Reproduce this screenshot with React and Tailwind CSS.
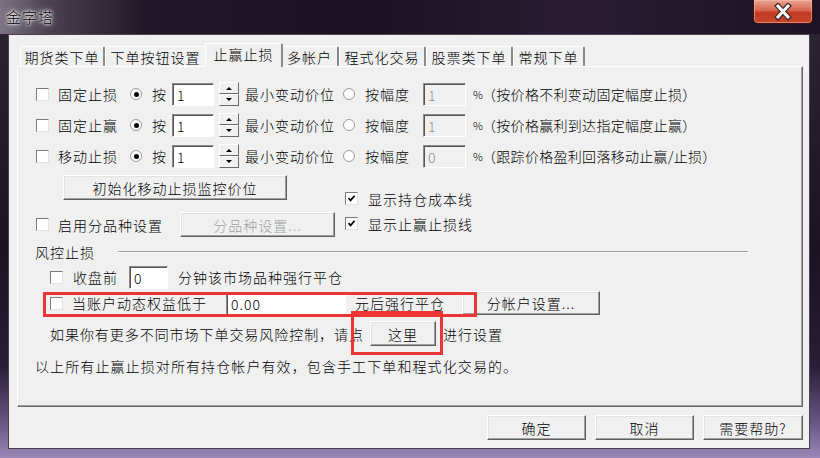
import React from 'react'

const Check = ({ checked }) => (
  <span className="w-[13px] h-[13px] shrink-0 bg-white border border-t-[#7a7a7a] border-l-[#7a7a7a] border-r-[#e2e2e2] border-b-[#e2e2e2] flex items-center justify-center">
    {checked && (
      <svg width="9" height="9" viewBox="0 0 9 9">
        <path d="M1.5 4.2 L3.6 6.4 L7.6 1.8" stroke="#000" strokeWidth="1.7" fill="none" />
      </svg>
    )}
  </span>
)

const Radio = ({ on }) => (
  <span className="w-[12px] h-[12px] shrink-0 rounded-full bg-white border border-[#9a9a9a] flex items-center justify-center">
    {on && <span className="w-[5px] h-[5px] rounded-full bg-black" />}
  </span>
)

const Field = ({ w, value, disabled }) => (
  <div
    className={
      'h-[23px] shrink-0 border border-t-[#8a8a8a] border-l-[#8a8a8a] border-r-white border-b-white shadow-[inset_1px_1px_0_#555] pl-[4px] pt-[3px] text-[14px] leading-[16px] ' +
      (disabled ? 'bg-[#f0f0f0] text-[#8c8c8c]' : 'bg-white text-black')
    }
    style={{ width: w }}
  >
    {value}
  </div>
)

const Btn = ({ w, h = 25, children, disabled }) => (
  <div
    className={
      'shrink-0 flex items-center justify-center bg-[#f0f0f0] border border-t-white border-l-white border-r-[#5f5f5f] border-b-[#5f5f5f] shadow-[inset_-1px_-1px_0_#a0a0a0,inset_1px_1px_0_#e3e3e3] leading-none tracking-[1px] ' +
      (disabled ? 'text-[#a0a0a0]' : 'text-black')
    }
    style={{ width: w, height: h }}
  >
    {children}
  </div>
)

const Spin = () => (
  <div className="flex flex-col w-[20px] h-[24px] shrink-0">
    {['M3 5 L6 2 L9 5 Z', 'M3 1 L6 4 L9 1 Z'].map((d, i) => (
      <div
        key={i}
        className="h-[12px] flex items-center justify-center bg-[#f0f0f0] border border-t-white border-l-white border-r-[#696969] border-b-[#696969]"
      >
        <svg width="12" height="6" viewBox="0 0 12 6">
          <path d={d} fill="#000" />
        </svg>
      </div>
    ))}
  </div>
)

const stopRows = [
  { label: '固定止损', pct: '1', note: '（按价格不利变动固定幅度止损）' },
  { label: '固定止赢', pct: '1', note: '（按价格赢利到达指定幅度止赢）' },
  { label: '移动止损', pct: '0', note: '（跟踪价格盈利回落移动止赢/止损）' },
]

const tabs = [
  { t: '期货类下单', w: 85 },
  { t: '下单按钮设置', w: 102 },
  { t: '止赢止损', w: 78, sel: true },
  { t: '多帐户', w: 58 },
  { t: '程式化交易', w: 87 },
  { t: '股票类下单', w: 87 },
  { t: '常规下单', w: 72 },
]

export default function App() {
  return (
    <div className="relative w-[820px] h-[458px] overflow-hidden flex flex-col font-['Noto_Sans_CJK_SC','Liberation_Sans',sans-serif] font-light text-[14px] text-black bg-[linear-gradient(180deg,#2e2535_0%,#1b1322_55%,#2a1d38_80%,#6d5a88_93%,#9a88b8_100%)]">
      {/* title bar */}
      <div className="h-[34px] shrink-0 flex items-start justify-between bg-[linear-gradient(90deg,#7c7482_0%,#4a4050_6%,#201828_18%,#1a1222_45%,#2a1c34_70%,#1c1424_100%)]">
        <div className="pl-[6px] pt-[8px] text-[15px] leading-[18px] tracking-[1px] text-black [text-shadow:0_0_6px_#fff,0_0_3px_#fff,0_0_2px_#fff]">
          金字塔
        </div>
        <div className="mr-[7px] w-[60px] h-[24px] rounded-b-[5px] border border-t-0 border-[#3c1410] bg-[linear-gradient(180deg,#e9a593_0%,#d8664e_45%,#c33a22_55%,#c8482c_100%)] shadow-[inset_0_0_0_1px_rgba(255,200,190,0.45)] flex items-center justify-center">
          <svg width="26" height="18" viewBox="0 0 26 18">
            <path d="M8 3 L18 14 M18 3 L8 14" stroke="#3a2a2a" strokeWidth="5.5" strokeLinecap="square" />
            <path d="M8 3 L18 14 M18 3 L8 14" stroke="#fff" strokeWidth="3" strokeLinecap="square" />
          </svg>
        </div>
      </div>

      {/* client area */}
      <div className="ml-[8px] mr-[10px] h-[415px] shrink-0 bg-[#f0f0f0] border border-[#4a4250] pt-[8px] px-[8px]">
        {/* tab strip */}
        <div className="h-[23px] flex items-end pl-[3px] relative z-10">
          {tabs.map((tab) =>
            tab.sel ? (
              <div
                key={tab.t}
                className="h-[24px] -mx-[2px] -mb-px bg-[#f0f0f0] border-t border-l border-t-white border-l-white border-r-2 border-r-[#8a8a8a] rounded-t-[2px] flex items-center justify-center pb-[3px] leading-none tracking-[1px] relative z-10"
                style={{ width: tab.w }}
              >
                {tab.t}
              </div>
            ) : (
              <div
                key={tab.t}
                className="h-[20px] bg-[#f0f0f0] border-t border-l border-t-white border-l-white border-r-2 border-r-[#8a8a8a] rounded-t-[2px] flex items-center justify-center leading-none tracking-[1px]"
                style={{ width: tab.w }}
              >
                {tab.t}
              </div>
            )
          )}
        </div>

        {/* tab panel */}
        <div className="w-[786px] h-[341px] border border-t-white border-l-white border-r-[#696969] border-b-[#696969] shadow-[inset_-1px_-1px_0_#a0a0a0] pt-[15px] pl-[18px] leading-none tracking-[1px]">
          {/* stop rows */}
          <div className="flex flex-col gap-[7px]">
            {stopRows.map((r) => (
              <div key={r.label} className="h-[24px] flex items-center">
                <span className="w-[22px] shrink-0"><Check /></span>
                <span className="w-[72px] shrink-0">{r.label}</span>
                <span className="w-[22px] shrink-0"><Radio on /></span>
                <span className="w-[20px] shrink-0">按</span>
                <Field w={42} value="1" />
                <span className="w-[5px] shrink-0" />
                <Spin />
                <span className="w-[6px] shrink-0" />
                <span className="w-[98px] shrink-0">最小变动价位</span>
                <span className="w-[22px] shrink-0"><Radio /></span>
                <span className="w-[58px] shrink-0">按幅度</span>
                <Field w={43} value={r.pct} disabled />
                <span className="w-[16px] shrink-0 pl-[7px] text-[11px] tracking-normal">%</span>
                <span className="whitespace-nowrap tracking-[0.3px]">{r.note}</span>
              </div>
            ))}
          </div>

          {/* display options */}
          <div className="flex mt-[7px]">
            <div className="w-[309px] shrink-0 flex flex-col">
              <div className="pl-[27px]">
                <Btn w={224} h={25}>初始化移动止损监控价位</Btn>
              </div>
              <div className="mt-[12px] h-[25px] flex items-center">
                <span className="w-[22px] shrink-0"><Check /></span>
                <span className="w-[122px] shrink-0">启用分品种设置</span>
                <Btn w={155} h={25} disabled>分品种设置...</Btn>
              </div>
            </div>
            <div className="pt-[11px] flex flex-col">
              <div className="h-[25px] flex items-center gap-[10px]">
                <Check checked />
                <span>显示持仓成本线</span>
              </div>
              <div className="h-[25px] flex items-center gap-[10px]">
                <Check checked />
                <span>显示止赢止损线</span>
              </div>
            </div>
          </div>

          {/* risk section */}
          <div className="mt-[5px] h-[20px] flex items-center -ml-px">
            <span className="w-[83px] shrink-0">风控止损</span>
            <div className="flex-1 mr-[54px] border-t border-t-[#a0a0a0] border-b border-b-white" />
          </div>

          <div className="mt-[3px] h-[24px] flex items-center pl-[14px]">
            <span className="w-[23px] shrink-0"><Check /></span>
            <span className="w-[56px] shrink-0">收盘前</span>
            <Field w={39} value="0" />
            <span className="pl-[10px]">分钟该市场品种强行平仓</span>
          </div>

          <div className="mt-[1px] h-[26px] flex items-center pl-[14px]">
            <span className="w-[22px] shrink-0"><Check /></span>
            <span className="w-[154px] shrink-0">当账户动态权益低于</span>
            <Field w={120} value="0.00" />
            <span className="w-[116px] shrink-0 pl-[9px]">元后强行平仓</span>
            <Btn w={138} h={24}>分帐户设置...</Btn>
          </div>

          <div className="mt-[5px] h-[25px] flex items-center pl-[14px]">
            <span className="w-[320px] shrink-0 whitespace-nowrap tracking-[0.95px]">如果你有更多不同市场下单交易风险控制，请点</span>
            <Btn w={66} h={25}>这里</Btn>
            <span className="pl-[7px]">进行设置</span>
          </div>

          <div className="mt-[10px] h-[20px] flex items-center -ml-px whitespace-nowrap tracking-[1.1px]">
            以上所有止赢止损对所有持仓帐户有效，包含手工下单和程式化交易的。
          </div>
        </div>

        {/* dialog buttons */}
        <div className="w-[786px] mt-[8px] flex justify-end gap-[9px]">
          <Btn w={99} h={25}>确定</Btn>
          <Btn w={99} h={25}>取消</Btn>
          <Btn w={100} h={25}>需要帮助?</Btn>
        </div>
      </div>

      {/* red annotation boxes */}
      <div className="absolute left-[43px] top-[292px] w-[434px] h-[25px] border-[3px] border-[#ee3535] pointer-events-none" />
      <div className="absolute left-[351px] top-[311px] w-[92px] h-[44px] border-[3px] border-[#ee3535] pointer-events-none" />
    </div>
  )
}
